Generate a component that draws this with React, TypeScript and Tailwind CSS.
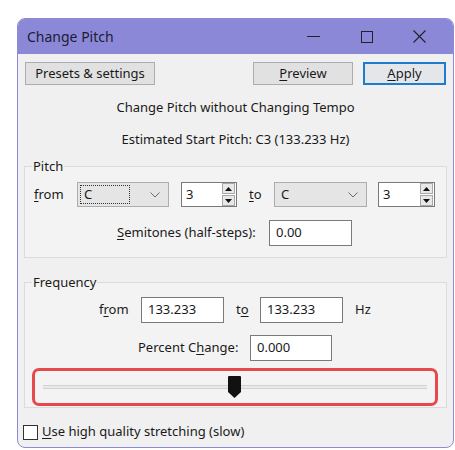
import React from "react";

const U = ({ children }: { children: React.ReactNode }) => (
  <span className="underline underline-offset-2 decoration-1">{children}</span>
);

function Chevron() {
  return (
    <svg width="10" height="6" viewBox="0 0 10 6" className="shrink-0">
      <path d="M0.5 0.5 L5 5 L9.5 0.5" fill="none" stroke="#6b6b6b" strokeWidth="1" />
    </svg>
  );
}

function Select({ w, focus }: { w: string; focus?: boolean }) {
  return (
    <div className={`${w} h-[25px] bg-[#e5e5e5] border border-[#adadad] flex items-center pl-[2px] pr-[8px] gap-1`}>
      <div className={`flex-1 h-[19px] flex items-center pl-[3px] ${focus ? "border border-dotted border-[#333]" : "border border-transparent"}`}>
        C
      </div>
      <div className="w-[12px]" />
      <Chevron />
    </div>
  );
}

function Arrow({ up }: { up?: boolean }) {
  return (
    <div className="h-[11px] w-[13px] bg-[#e8e8e8] border border-[#a8a8a8] flex items-center justify-center">
      <svg width="7" height="4" viewBox="0 0 7 4">
        {up ? <path d="M0 4 L3.5 0 L7 4 Z" fill="#111" /> : <path d="M0 0 L3.5 4 L7 0 Z" fill="#111" />}
      </svg>
    </div>
  );
}

function Spinner({ w }: { w: string }) {
  return (
    <div className={`${w} h-[25px] bg-white border border-[#7a7a7a] flex items-center pl-[4px] pr-[1px]`}>
      <span className="flex-1">3</span>
      <div className="flex flex-col gap-[1px]">
        <Arrow up />
        <Arrow />
      </div>
    </div>
  );
}

function Input({ w, value }: { w: string; value: string }) {
  return (
    <div className={`${w} h-[26px] bg-white border border-[#7a7a7a] flex items-center pl-[6px]`}>{value}</div>
  );
}

export default function App() {
  return (
    <div className="w-[455px] h-[450px] bg-white pt-[18px] pl-[17px] font-['Noto_Sans',sans-serif] text-[13px] text-[#1a1a1a]">
      <div className="w-[437px] h-[430px] rounded-[8px] border border-[#8d8ad6] overflow-hidden bg-[#f0f0f0] flex flex-col">
        {/* Title bar */}
        <div className="h-[35px] bg-[#8b88d8] flex items-center pl-[9px] shrink-0">
          <span className="text-[14px] text-[#1c1c36]">Change Pitch</span>
          <div className="flex-1" />
          <div className="w-[53px] flex justify-center">
            <div className="w-[13px] h-[1px] bg-[#222]" />
          </div>
          <div className="w-[53px] flex justify-center">
            <div className="w-[12px] h-[12px] border border-[#222]" />
          </div>
          <div className="w-[53px] flex justify-center">
            <svg width="13" height="13" viewBox="0 0 13 13">
              <path d="M0.5 0.5 L12.5 12.5 M12.5 0.5 L0.5 12.5" stroke="#222" strokeWidth="1.1" />
            </svg>
          </div>
          <div className="w-[7px]" />
        </div>

        {/* Body */}
        <div className="flex flex-col px-[6px]">
          {/* Buttons */}
          <div className="flex items-center mt-[8px] h-[23px] pl-[1px]">
            <div className="w-[130px] h-[23px] bg-[#e1e1e1] border border-[#adadad] flex items-center justify-center">
              Presets &amp; settings
            </div>
            <div className="flex-1" />
            <div className="w-[100px] h-[23px] bg-[#e1e1e1] border border-[#adadad] flex items-center justify-center">
              <U>P</U>review
            </div>
            <div className="w-[10px]" />
            <div className="w-[83px] h-[23px] bg-[#e4e6e9] border-2 border-[#1f7bd0] flex items-center justify-center">
              <U>A</U>pply
            </div>
            <div className="w-[1px]" />
          </div>

          <div className="mt-[12px] h-[20px] leading-[20px] text-center">Change Pitch without Changing Tempo</div>
          <div className="mt-[12px] h-[20px] leading-[20px] text-center">Estimated Start Pitch: C3 (133.233 Hz)</div>

          {/* Pitch group */}
          <fieldset className="mt-[8px] border border-[#dcdcdc] bg-[#f3f3f3] pb-[11px]">
            <legend className="ml-[7px] px-[1px] leading-[18px] h-[18px]">Pitch</legend>
            <div className="flex items-center mt-[7px] pl-[9px]">
              <div className="w-[43px]">
                <U>f</U>rom
              </div>
              <Select w="w-[92px]" focus />
              <div className="w-[12px]" />
              <Spinner w="w-[56px]" />
              <div className="w-[12px]" />
              <div className="w-[25px]">
                <U>t</U>o
              </div>
              <Select w="w-[93px]" />
              <div className="w-[11px]" />
              <Spinner w="w-[57px]" />
            </div>
            <div className="flex items-center mt-[13px] pl-[92px]">
              <div className="w-[152px] whitespace-nowrap">
                <U>S</U>emitones (half-steps):
              </div>
              <Input w="w-[83px]" value="0.00" />
            </div>
          </fieldset>

          {/* Frequency group */}
          <fieldset className="mt-[15px] border border-[#dcdcdc] bg-[#f3f3f3] pb-[1px]">
            <legend className="ml-[7px] px-[1px] leading-[18px] h-[18px]">Frequency</legend>
            <div className="flex items-center mt-[6px] pl-[74px]">
              <div className="w-[42px]">
                f<U>r</U>om
              </div>
              <Input w="w-[83px]" value="133.233" />
              <div className="w-[12px]" />
              <div className="w-[24px]">
                t<U>o</U>
              </div>
              <Input w="w-[83px]" value="133.233" />
              <div className="w-[12px]" />
              <div>Hz</div>
            </div>
            <div className="flex items-center mt-[12px] pl-[113px]">
              <div className="w-[112px] whitespace-nowrap">
                Percent C<U>h</U>ange:
              </div>
              <Input w="w-[82px]" value="0.000" />
            </div>
            <div className="mt-[7px] ml-[7px] w-[406px] h-[38px] rounded-[7px] border-[3px] border-[#e4494b] flex items-center px-[8px]">
              <div className="relative w-full h-[22px] flex items-center">
                <div className="w-full h-[4px] bg-[#e9e9e9] border-y border-[#d2d2d2]" />
                <svg width="13" height="22" viewBox="0 0 13 22" className="absolute left-[185px] top-[0px]">
                  <path d="M1 0 H12 A1 1 0 0 1 13 1 V16 L6.5 22 L0 16 V1 A1 1 0 0 1 1 0 Z" fill="#111" />
                </svg>
              </div>
            </div>
          </fieldset>

          {/* Checkbox */}
          <div className="flex items-center mt-[16px] h-[16px] ml-[-1px]">
            <div className="w-[15px] h-[15px] bg-white border border-[#333]" />
            <div className="ml-[4px] whitespace-nowrap">
              <U>U</U>se high quality stretching (slow)
            </div>
          </div>
        </div>
      </div>
    </div>
  );
}
